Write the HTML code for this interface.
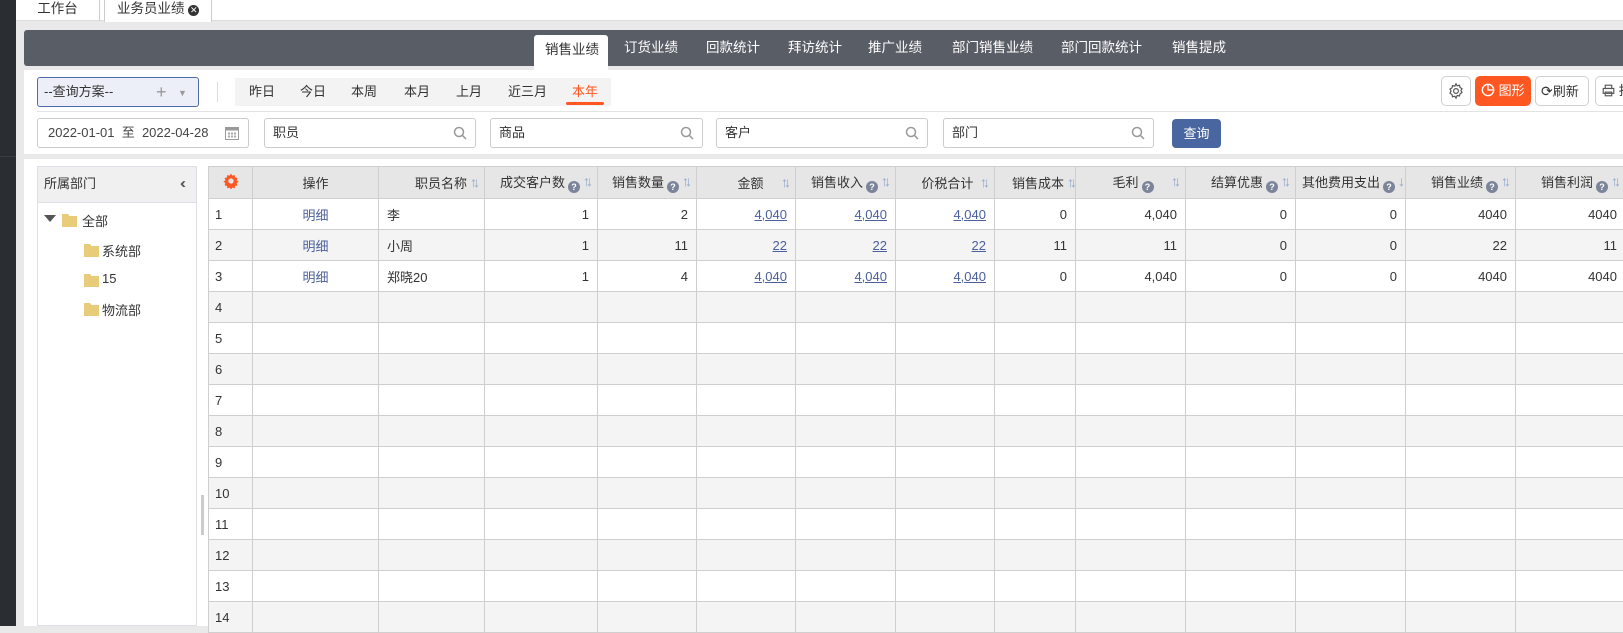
<!DOCTYPE html>
<html><head><meta charset="utf-8"><style>
*{box-sizing:border-box;margin:0;padding:0}
body{width:1623px;height:626px;overflow:hidden;background:#e9e9e9;font-family:"Liberation Sans","Noto Sans CJK SC",sans-serif;font-size:13px;color:#333;position:relative}
.a{position:absolute}
.navt{position:absolute;top:30px;height:36px;line-height:36px;color:#fff;font-size:13.5px}
.dq{position:absolute;top:78px;height:28px;line-height:28px;font-size:13px;color:#333}
.inp{position:absolute;top:118px;height:30px;border:1px solid #ccc;border-radius:3px;background:#fff;line-height:28px;padding-left:8px;font-size:13px}
.mag{position:absolute;right:8px;top:7px}
table{border-collapse:collapse;table-layout:fixed;position:absolute;left:208px;top:166px;width:1417px}
td,th{border:1px solid #cfcfcf;height:31px;padding:0 8px;font-weight:normal;white-space:nowrap;overflow:hidden;font-size:13px}
th{background:#e6e6e6;height:32px;text-align:right;color:#333}
td{text-align:right}
tr.e td{background:#f4f4f4}
tr.o td{background:#fff}
td.n{text-align:left;padding-left:6px}
td.c{text-align:center;color:#4a5f9c}
td.l{text-align:left}
u{color:#4a5f9c}
.q{display:inline-block;width:12px;height:12px;border-radius:6px;background:#7b8499;color:#fff;font-size:9px;line-height:12px;text-align:center;font-weight:bold;vertical-align:-3px;margin-left:3px}
.s{color:#8ea5cc;font-size:14px;margin-left:3px;letter-spacing:-4px;vertical-align:1px}
.btn{position:absolute;top:76px;height:30px;border:1px solid #d0d0d0;border-radius:5px;background:#fff;line-height:28px;font-size:13px}
</style></head><body>
<div class="a" style="left:0;top:0;width:16px;height:626px;background:#2a2e32"></div>
<div class="a" style="left:0;top:156px;width:16px;height:1px;background:#3a3e42"></div>
<div class="a" style="left:16px;top:0;width:1607px;height:21px;background:#fff;border-bottom:1px solid #ddd"></div>
<div class="a" style="left:16px;top:0;width:84px;height:21px;border-right:1px solid #ccc;text-align:center;line-height:18px;font-size:13.5px">工作台</div>
<div class="a" style="left:104px;top:0;width:108px;height:22px;border-left:1px solid #ccc;border-right:1px solid #ccc;background:#fff;line-height:18px;font-size:13.5px;padding-left:12px">业务员业绩 <span style="display:inline-block;width:11px;height:11px;border-radius:6px;background:#333;color:#fff;font-size:9px;line-height:11px;text-align:center;vertical-align:0px">✕</span></div>
<div class="a" style="left:24px;top:30px;width:1599px;height:36px;background:#595d66;border-radius:3px 0 0 3px"></div>
<div class="a" style="left:534px;top:35px;width:74px;height:36px;background:#fff;border-radius:3px 3px 0 0"></div>
<div class="navt" style="left:545px;color:#333;top:32px">销售业绩</div>
<div class="navt" style="left:624px">订货业绩</div>
<div class="navt" style="left:706px">回款统计</div>
<div class="navt" style="left:788px">拜访统计</div>
<div class="navt" style="left:868px">推广业绩</div>
<div class="navt" style="left:952px">部门销售业绩</div>
<div class="navt" style="left:1061px">部门回款统计</div>
<div class="navt" style="left:1172px">销售提成</div>
<div class="a" style="left:24px;top:70px;width:1599px;height:84px;background:#fff"></div>
<div class="a" style="left:37px;top:77px;width:162px;height:30px;background:#eceff7;border:1px solid #4f6ca8;border-radius:3px;line-height:28px;padding-left:6px;font-size:13px">--查询方案--<span style="position:absolute;left:118px;color:#999;font-size:18px">+</span><span style="position:absolute;left:140px;top:1px;color:#999;font-size:9px">▼</span></div>
<div class="a" style="left:217px;top:82px;width:1px;height:20px;background:#ddd"></div>
<div class="a" style="left:235px;top:78px;width:376px;height:28px;background:#f3f3f3"></div>
<div class="dq" style="left:249px">昨日</div>
<div class="dq" style="left:300px">今日</div>
<div class="dq" style="left:351px">本周</div>
<div class="dq" style="left:404px">本月</div>
<div class="dq" style="left:456px">上月</div>
<div class="dq" style="left:508px">近三月</div>
<div class="dq" style="left:572px;color:#ff5722">本年</div>
<div class="a" style="left:566px;top:102px;width:38px;height:3px;border-radius:2px;background:#ff5722"></div>
<div class="btn" style="left:1441px;width:30px;text-align:center"><svg width="18" height="18" viewBox="0 0 24 24" style="margin-top:5px" fill="none" stroke="#555" stroke-width="1.6"><circle cx="12" cy="12" r="3.2"/><path d="M12 2.5l1.6 2.6 3-.8.8 3 2.6 1.6-1.4 2.6 1.4 2.6-2.6 1.6-.8 3-3-.8L12 21.5l-1.6-2.6-3 .8-.8-3-2.6-1.6L5.4 12 4 9.4l2.6-1.6.8-3 3 .8z"/></svg></div>
<div class="btn" style="left:1475px;width:56px;background:#ff5722;border-color:#ff5722;color:#fff;padding-left:5px"><svg width="14" height="14" viewBox="0 0 16 16" style="vertical-align:-2px" fill="none" stroke="#fff" stroke-width="1.5"><circle cx="8" cy="8" r="6.5"/><path d="M8 1.5V8H14.5"/></svg> 图形</div>
<div class="btn" style="left:1535px;width:54px;padding-left:5px"><span style="font-size:14px">⟳</span>刷新</div>
<div class="btn" style="left:1595px;width:40px;padding-left:6px"><svg width="13" height="13" viewBox="0 0 16 16" style="vertical-align:-2px" fill="none" stroke="#555" stroke-width="1.4"><rect x="4" y="1.5" width="8" height="4"/><rect x="1.5" y="5.5" width="13" height="6"/><rect x="4" y="10" width="8" height="4.5"/></svg> 打</div>
<div class="a" style="left:37px;top:111px;width:1586px;height:1px;background:#e3e3e3"></div>
<div class="inp" style="left:37px;width:212px;color:#444;padding-left:10px">2022-01-01 &nbsp;至 &nbsp;2022-04-28<svg class="mag" style="top:6px" width="16" height="16" viewBox="0 0 16 16"><rect x="1.5" y="2.5" width="13" height="12" fill="none" stroke="#999"/><rect x="1.5" y="2.5" width="13" height="3" fill="#999"/><g fill="#aaa"><rect x="4" y="7.5" width="2" height="2"/><rect x="7" y="7.5" width="2" height="2"/><rect x="10" y="7.5" width="2" height="2"/><rect x="4" y="10.5" width="2" height="2"/><rect x="7" y="10.5" width="2" height="2"/><rect x="10" y="10.5" width="2" height="2"/></g></svg></div>
<div class="inp" style="left:264px;width:212px">职员<svg class="mag" width="14" height="14" viewBox="0 0 14 14" fill="none" stroke="#999" stroke-width="1.5"><circle cx="6" cy="6" r="4.5"/><path d="M9.3 9.3L13 13"/></svg></div>
<div class="inp" style="left:490px;width:213px">商品<svg class="mag" width="14" height="14" viewBox="0 0 14 14" fill="none" stroke="#999" stroke-width="1.5"><circle cx="6" cy="6" r="4.5"/><path d="M9.3 9.3L13 13"/></svg></div>
<div class="inp" style="left:716px;width:212px">客户<svg class="mag" width="14" height="14" viewBox="0 0 14 14" fill="none" stroke="#999" stroke-width="1.5"><circle cx="6" cy="6" r="4.5"/><path d="M9.3 9.3L13 13"/></svg></div>
<div class="inp" style="left:943px;width:211px">部门<svg class="mag" width="14" height="14" viewBox="0 0 14 14" fill="none" stroke="#999" stroke-width="1.5"><circle cx="6" cy="6" r="4.5"/><path d="M9.3 9.3L13 13"/></svg></div>
<div class="a" style="left:1172px;top:119px;width:49px;height:29px;background:#4a66a0;border-radius:4px;color:#fff;text-align:center;line-height:29px">查询</div>
<div class="a" style="left:24px;top:159px;width:1599px;height:467px;background:#fff"></div>
<div class="a" style="left:37px;top:166px;width:160px;height:460px;border:1px solid #dde0e6"></div>
<div class="a" style="left:38px;top:167px;width:158px;height:36px;background:#f0f0f0;border-bottom:1px solid #dde0e6;line-height:34px;padding-left:6px">所属部门<span style="position:absolute;right:14px;color:#555;font-size:15px;letter-spacing:-4px">‹‹</span></div>
<div class="a" style="left:44px;top:215px;width:0;height:0;border-left:6px solid transparent;border-right:6px solid transparent;border-top:7px solid #555"></div>
<svg class="a" style="left:62px;top:213px" width="16" height="14" viewBox="0 0 16 14"><path d="M0 1h6l1.5 2H15v11H0z" fill="#e8cc7a"/></svg>
<div class="a" style="left:82px;top:211px">全部</div>
<svg class="a" style="left:84px;top:243px" width="16" height="14" viewBox="0 0 16 14"><path d="M0 1h6l1.5 2H15v11H0z" fill="#e8cc7a"/></svg>
<div class="a" style="left:102px;top:241px">系统部</div>
<svg class="a" style="left:84px;top:273px" width="16" height="14" viewBox="0 0 16 14"><path d="M0 1h6l1.5 2H15v11H0z" fill="#e8cc7a"/></svg>
<div class="a" style="left:102px;top:271px">15</div>
<svg class="a" style="left:84px;top:302px" width="16" height="14" viewBox="0 0 16 14"><path d="M0 1h6l1.5 2H15v11H0z" fill="#e8cc7a"/></svg>
<div class="a" style="left:102px;top:300px">物流部</div>
<div class="a" style="left:201px;top:495px;width:3px;height:40px;background:#ccc"></div>
<table>
<colgroup><col style="width:44px"><col style="width:126px"><col style="width:106px"><col style="width:113px"><col style="width:99px"><col style="width:99px"><col style="width:100px"><col style="width:99px"><col style="width:81px"><col style="width:110px"><col style="width:110px"><col style="width:110px"><col style="width:110px"><col style="width:110px"></colgroup>
<tr><th style="text-align:center"><svg width="16" height="16" viewBox="0 0 24 24"><path fill="#ff5722" d="M12 1l2 3 3.5-1 .5 3.5 3.5 1-1 3.5 3 2-3 2 1 3.5-3.5 1-.5 3.5-3.5-1-2 3-2-3-3.5 1-.5-3.5-3.5-1 1-3.5-3-2 3-2-1-3.5 3.5-1 .5-3.5 3.5 1z"/><circle cx="12" cy="12" r="4" fill="#e6e6e6"/></svg></th>
<th style="text-align:center">操作</th><th>职员名称<span class="s">↑↓</span></th><th>成交客户数<span class="q">?</span><span class="s">↑↓</span></th><th>销售数量<span class="q">?</span><span class="s">↑↓</span></th><th>金额 &nbsp; &nbsp;<span class="s">↑↓</span></th><th>销售收入<span class="q">?</span><span class="s">↑↓</span></th><th>价税合计 <span class="s">↑↓</span></th><th style="padding:0 2px">销售成本<span class="s">↑↓</span></th><th>毛利<span class="q">?</span> &nbsp; &nbsp;<span class="s">↑↓</span></th><th>结算优惠<span class="q">?</span><span class="s">↑↓</span></th><th style="padding:0 4px 0 2px">其他费用支出<span class="q">?</span><span class="s">↓</span></th><th>销售业绩<span class="q">?</span><span class="s">↑↓</span></th><th>销售利润<span class="q">?</span><span class="s">↑↓</span></th></tr>
<tr class="o"><td class="n">1</td><td class="c">明细</td><td class="l">李</td><td>1</td><td>2</td><td><u>4,040</u></td><td><u>4,040</u></td><td><u>4,040</u></td><td>0</td><td>4,040</td><td>0</td><td>0</td><td>4040</td><td>4040</td></tr>
<tr class="e"><td class="n">2</td><td class="c">明细</td><td class="l">小周</td><td>1</td><td>11</td><td><u>22</u></td><td><u>22</u></td><td><u>22</u></td><td>11</td><td>11</td><td>0</td><td>0</td><td>22</td><td>11</td></tr>
<tr class="o"><td class="n">3</td><td class="c">明细</td><td class="l">郑晓20</td><td>1</td><td>4</td><td><u>4,040</u></td><td><u>4,040</u></td><td><u>4,040</u></td><td>0</td><td>4,040</td><td>0</td><td>0</td><td>4040</td><td>4040</td></tr>
<tr class="e"><td class="n">4</td><td></td><td></td><td></td><td></td><td></td><td></td><td></td><td></td><td></td><td></td><td></td><td></td><td></td></tr>
<tr class="o"><td class="n">5</td><td></td><td></td><td></td><td></td><td></td><td></td><td></td><td></td><td></td><td></td><td></td><td></td><td></td></tr>
<tr class="e"><td class="n">6</td><td></td><td></td><td></td><td></td><td></td><td></td><td></td><td></td><td></td><td></td><td></td><td></td><td></td></tr>
<tr class="o"><td class="n">7</td><td></td><td></td><td></td><td></td><td></td><td></td><td></td><td></td><td></td><td></td><td></td><td></td><td></td></tr>
<tr class="e"><td class="n">8</td><td></td><td></td><td></td><td></td><td></td><td></td><td></td><td></td><td></td><td></td><td></td><td></td><td></td></tr>
<tr class="o"><td class="n">9</td><td></td><td></td><td></td><td></td><td></td><td></td><td></td><td></td><td></td><td></td><td></td><td></td><td></td></tr>
<tr class="e"><td class="n">10</td><td></td><td></td><td></td><td></td><td></td><td></td><td></td><td></td><td></td><td></td><td></td><td></td><td></td></tr>
<tr class="o"><td class="n">11</td><td></td><td></td><td></td><td></td><td></td><td></td><td></td><td></td><td></td><td></td><td></td><td></td><td></td></tr>
<tr class="e"><td class="n">12</td><td></td><td></td><td></td><td></td><td></td><td></td><td></td><td></td><td></td><td></td><td></td><td></td><td></td></tr>
<tr class="o"><td class="n">13</td><td></td><td></td><td></td><td></td><td></td><td></td><td></td><td></td><td></td><td></td><td></td><td></td><td></td></tr>
<tr class="e"><td class="n">14</td><td></td><td></td><td></td><td></td><td></td><td></td><td></td><td></td><td></td><td></td><td></td><td></td><td></td></tr>
</table>
</body></html>
